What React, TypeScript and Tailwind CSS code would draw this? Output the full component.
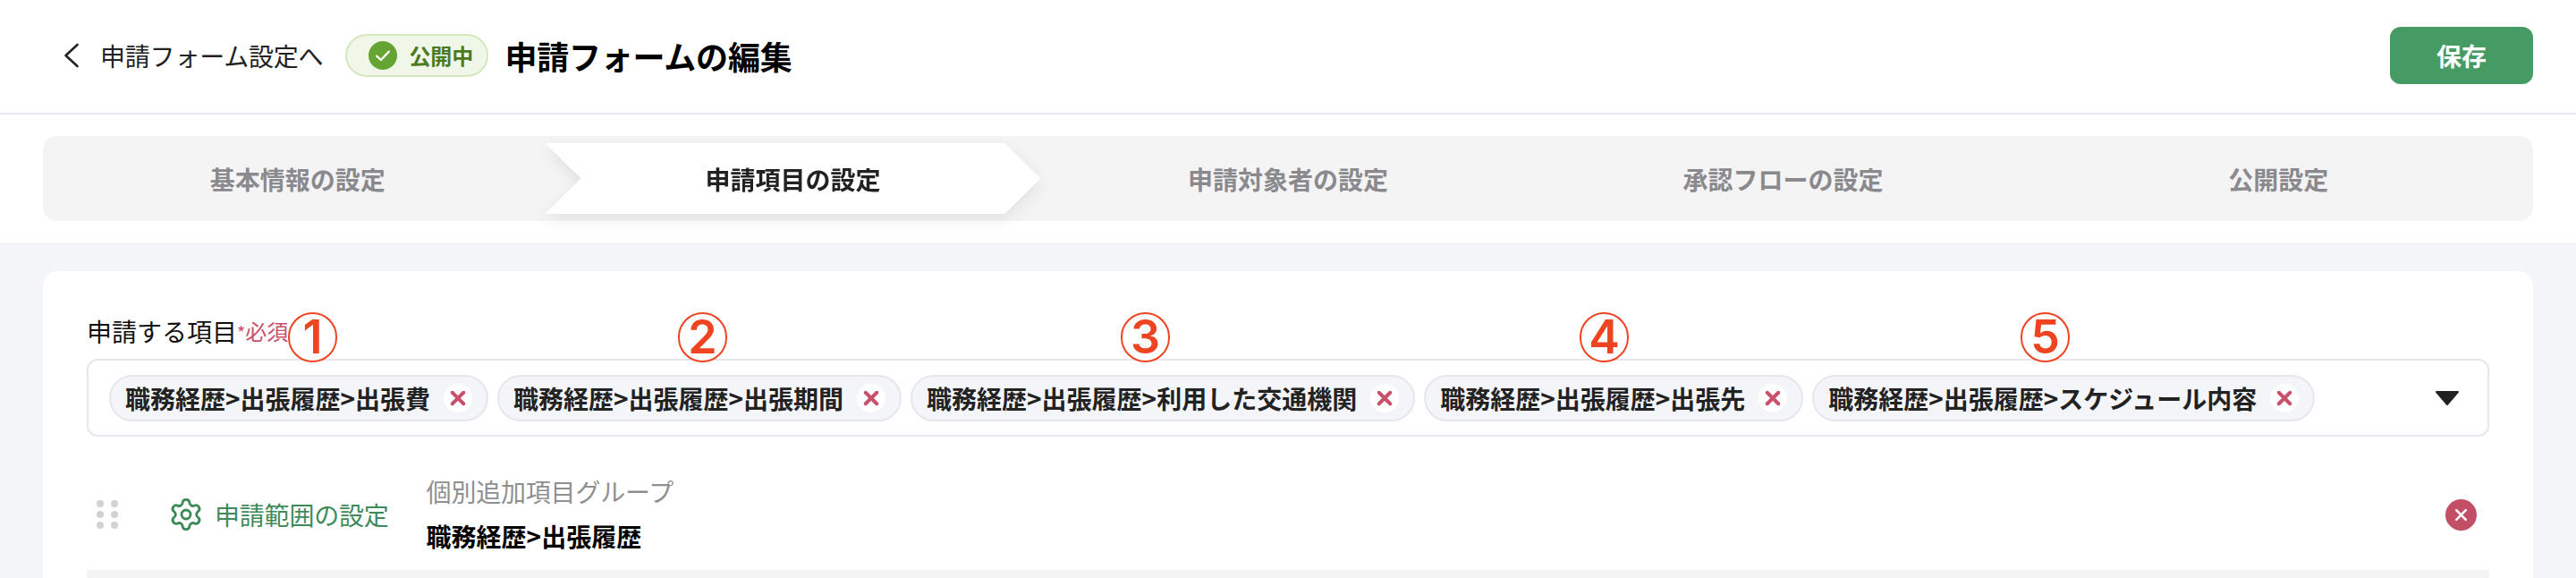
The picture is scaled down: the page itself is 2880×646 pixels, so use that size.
import { Settings } from 'lucide-react';

const steps = ['基本情報の設定', '申請項目の設定', '申請対象者の設定', '承認フローの設定', '公開設定'];

const chips = [
  '職務経歴>出張履歴>出張費',
  '職務経歴>出張履歴>出張期間',
  '職務経歴>出張履歴>利用した交通機関',
  '職務経歴>出張履歴>出張先',
  '職務経歴>出張履歴>スケジュール内容',
];

const marks = [
  { label: '1', className: 'left-[223px]' },
  { label: '2', className: 'left-[659px]' },
  { label: '3', className: 'left-[1154px]' },
  { label: '4', className: 'left-[1667px]' },
  { label: '5', className: 'left-[2160px]' },
];

function CrossIcon({ className }: { className: string }) {
  return (
    <svg viewBox="0 0 16 16" className={className} fill="none" stroke="currentColor" strokeLinecap="round">
      <path d="M3 3l10 10M13 3L3 13" />
    </svg>
  );
}

function Chip({ label }: { label: string }) {
  return (
    <div className="flex h-[52px] items-center gap-[15px] rounded-full border-2 border-[#e6e6ec] bg-[#f4f5f9] pl-[16px] pr-[16px]">
      <span className="text-[28px] leading-none font-bold whitespace-nowrap text-[#222222]">{label}</span>
      <span className="flex h-8 w-8 items-center justify-center rounded-full bg-white text-[#c9506a]">
        <CrossIcon className="h-5 w-5 stroke-[3.2]" />
      </span>
    </div>
  );
}

export default function App() {
  return (
    <div className="h-[646px] overflow-hidden bg-[#f4f5f9] font-['Noto_Sans_CJK_JP',sans-serif]">
      <header className="flex h-[128px] items-center border-b-2 border-[#e6e6ec] bg-white pb-[2px] pl-[71px] pr-[48px]">
        <svg viewBox="0 0 18 28" className="h-[28px] w-[18px]" fill="none" stroke="#222222" strokeWidth="2.6" strokeLinecap="round" strokeLinejoin="round">
          <path d="M15.5 2L2.5 14l13 12" />
        </svg>
        <span className="ml-[23px] text-[28px] tracking-[-0.2px] text-[#222222]">申請フォーム設定へ</span>
        <div className="ml-[25px] flex h-[48px] w-[160px] items-center rounded-full border-2 border-[#d5e8bd] bg-[#f0f7e8] pl-6">
          <span className="flex h-8 w-8 items-center justify-center rounded-full bg-[#65a332]">
            <svg viewBox="0 0 16 16" className="h-5 w-5" fill="none" stroke="white" strokeWidth="1.8" strokeLinecap="round" strokeLinejoin="round">
              <path d="M2.5 8.5l3.8 3.5 7.2-7.5" />
            </svg>
          </span>
          <span className="ml-[13px] text-[24px] leading-none font-bold text-[#4c7a1f]">公開中</span>
        </div>
        <h1 className="ml-[18px] text-[36px] font-bold tracking-[-0.2px] text-black">申請フォームの編集</h1>
        <button className="ml-auto h-[64px] w-[160px] rounded-xl bg-[#469b63] text-[28px] font-bold text-white">保存</button>
      </header>

      <div className="bg-white px-12 pt-6 pb-6">
        <nav className="grid h-[95px] grid-cols-5 rounded-2xl bg-[#f4f4f5] p-2">
          {steps.map((step, i) =>
            i === 1 ? (
              <div key={step} className="drop-shadow-[0_6px_8px_rgba(0,0,0,0.08)]">
                <div className="flex h-full items-center justify-center bg-white text-[28px] font-bold text-[#222222] [clip-path:polygon(0_0,calc(100%-40px)_0,100%_50%,calc(100%-40px)_100%,0_100%,40px_50%)]">
                  {step}
                </div>
              </div>
            ) : (
              <div key={step} className="flex items-center justify-center text-[28px] font-bold text-[#8a8a8e]">
                {step}
              </div>
            ),
          )}
        </nav>
      </div>

      <main className="mx-12 mt-8 rounded-t-2xl bg-white px-[49px] pt-[47px]">
        <div className="flex h-[40px] items-center">
          <span className="text-[28px] text-[#111111]">申請する項目</span>
          <span className="text-[24px] leading-none text-[#c9506a]">
            <span className="text-[20px]">*</span>必須
          </span>
        </div>

        <div className="relative mt-[11px] flex h-[87px] items-center gap-[10px] rounded-xl border-2 border-[#e6e6ec] pl-[23px] pr-[31px]">
          {marks.map((mark) => (
            <span
              key={mark.label}
              className={`absolute top-[-54px] flex h-[56px] w-[55px] items-center justify-center rounded-full border-2 border-[#ee4422] bg-white font-['Inter',sans-serif] text-[52px] leading-none font-semibold text-[#ee4422] ${mark.className}`}
            >
              {mark.label}
            </span>
          ))}
          {chips.map((chip) => (
            <Chip key={chip} label={chip} />
          ))}
          <svg viewBox="0 0 28 18" className="ml-auto h-[18px] w-[28px]" fill="#222222" stroke="#222222" strokeWidth="2" strokeLinejoin="round">
            <path d="M2 2h24L14 16z" />
          </svg>
        </div>

        <div className="mt-[42px] flex h-[90px] items-center pl-[11px] pr-[14px]">
          <div className="grid grid-cols-2 gap-x-2 gap-y-1">
            {[0, 1, 2, 3, 4, 5].map((dot) => (
              <span key={dot} className="h-2 w-2 rounded-full bg-[#d2d2d2]" />
            ))}
          </div>
          <Settings className="-m-[3px] ml-[56px] h-[40px] w-[40px] text-[#3a8a58]" strokeWidth={1.7} />
          <span className="ml-[15px] text-[28px] tracking-[-0.2px] text-[#3f8a5a]">申請範囲の設定</span>
          <div className="ml-[42px] flex flex-col gap-[10px]">
            <span className="-mt-[2px] text-[28px] leading-[40px] tracking-[-0.2px] text-[#8f8f8f]">個別追加項目グループ</span>
            <span className="text-[28px] leading-[40px] font-bold text-black">職務経歴&gt;出張履歴</span>
          </div>
          <span className="ml-auto flex h-[35px] w-[35px] items-center justify-center rounded-full bg-[#c34f66] text-white">
            <CrossIcon className="h-[17px] w-[17px] stroke-[2.4]" />
          </span>
        </div>

        <div className="mt-[17px] h-[40px] bg-[#f4f4f5]" />
      </main>
    </div>
  );
}
